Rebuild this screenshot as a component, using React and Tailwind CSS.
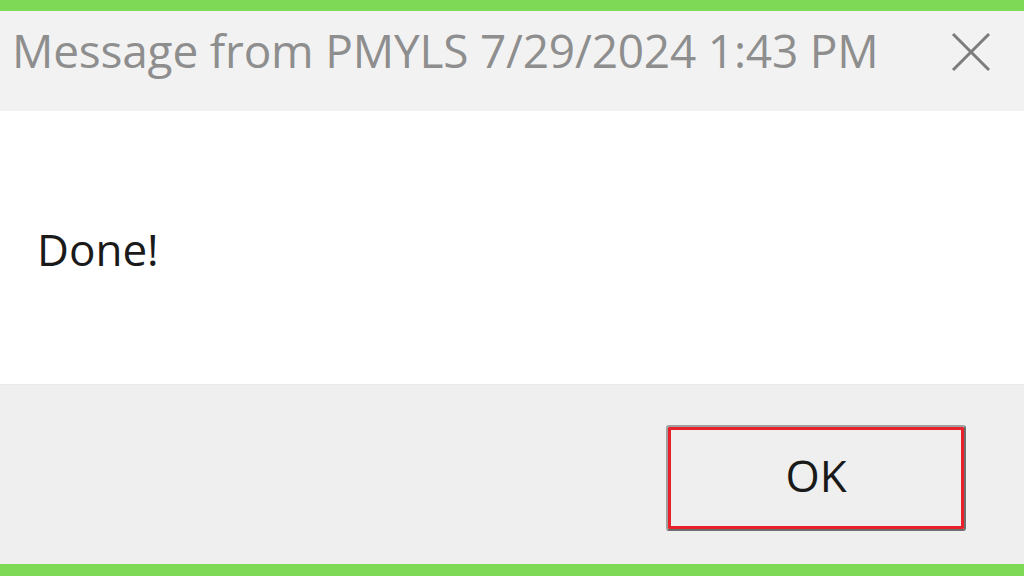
import React from "react";

const App = () => {
  return (
    <div className="w-[1024px] h-[576px] flex flex-col bg-[#7ed957] font-['Open_Sans',sans-serif] overflow-hidden">
      {/* top green strip */}
      <div className="h-[11px] shrink-0" />

      {/* Title bar */}
      <div className="h-[100px] shrink-0 bg-[#f2f2f2] flex items-center justify-between pl-[12px] pr-[33px]">
        <span className="text-[46px] leading-none text-[#8e8e8e] tracking-[-0.2px] pb-[22px]">
          Message from PMYLS 7/29/2024 1:43 PM
        </span>
        <svg width="40" height="40" viewBox="0 0 40 40" className="text-[#7c7c7c] mb-[18px]">
          <path d="M2 2 L38 38 M38 2 L2 38" stroke="currentColor" strokeWidth="3" fill="none" />
        </svg>
      </div>

      {/* Message body */}
      <div className="h-[273px] shrink-0 bg-white flex items-center pl-[37px] pt-[2px]">
        <span className="text-[44px] leading-none text-[#1a1a1a]">Done!</span>
      </div>

      {/* Footer */}
      <div className="h-[180px] shrink-0 bg-[#efefef] border-t border-[#e9e9e9] flex justify-end pr-[58px] pt-[40px]">
        <button className="w-[300px] h-[106px] bg-[#efefef] border-2 border-[#a0a0a0] border-r-[#6e6e6e] border-b-[#6e6e6e] rounded-[3px] ring-[3px] ring-inset ring-[#e8212a] flex items-center justify-center">
          <span className="text-[44px] leading-none text-[#1a1a1a] pb-[6px]">OK</span>
        </button>
      </div>

      {/* bottom green strip */}
      <div className="flex-1" />
    </div>
  );
};

export default App;
